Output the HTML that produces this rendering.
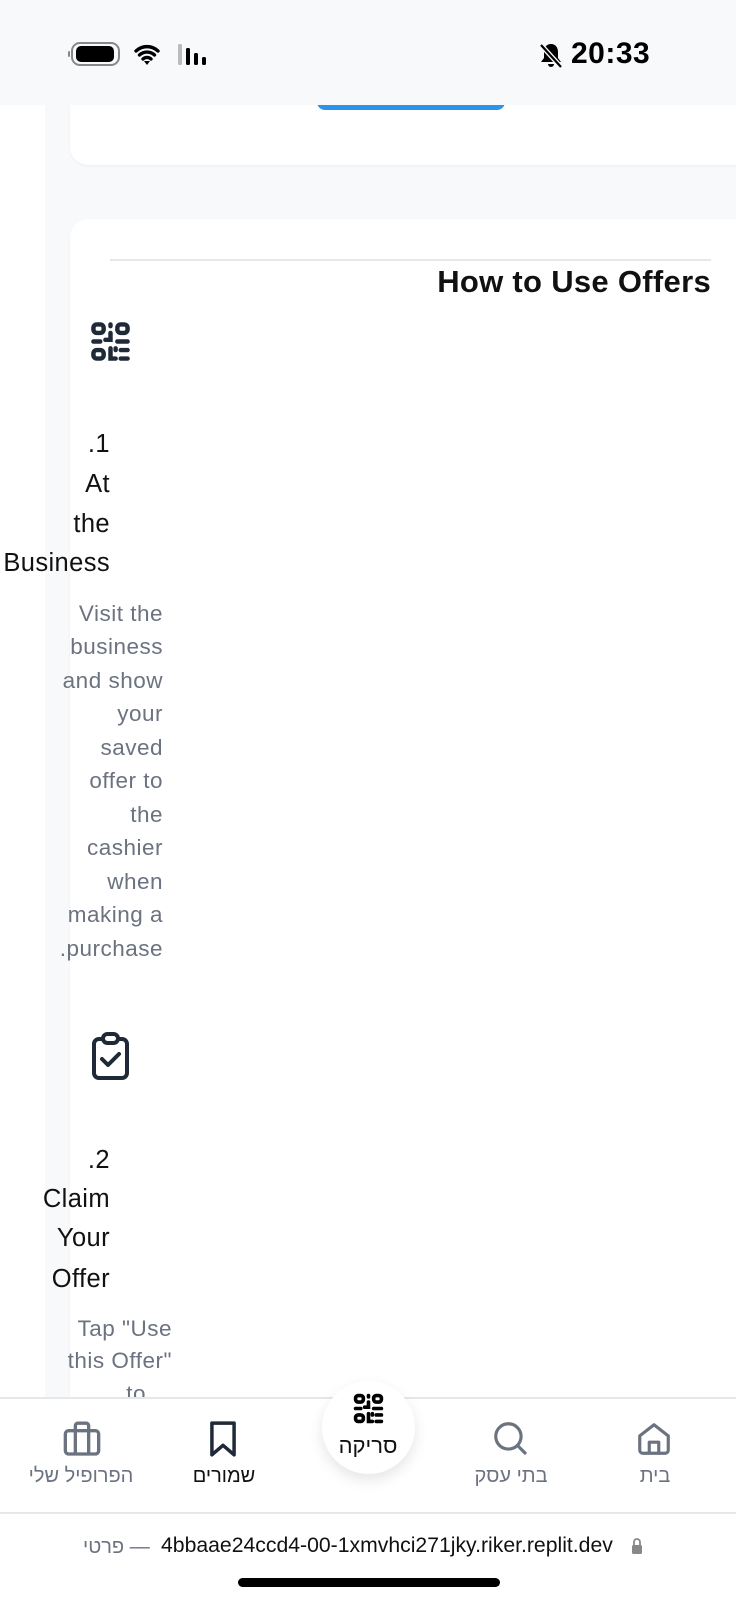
<!DOCTYPE html>
<html><head><meta charset="utf-8">
<style>
*{margin:0;padding:0;box-sizing:border-box}
body{width:736px;height:1600px;position:relative;overflow:hidden;background:#fff;font-family:"Liberation Sans","Noto Sans CJK JP",sans-serif;}
.a{position:absolute;white-space:nowrap}
.t{font-size:25.5px;color:#111;line-height:40px;text-align:right;width:200px;letter-spacing:0.4px}
.d{font-size:22.5px;color:#6b7280;line-height:33.5px;text-align:right;width:200px;letter-spacing:0.5px}
.nl{font-size:20px;color:#6b7280;text-align:center;width:160px}
</style></head><body>
<div class="a" style="left:45px;top:0;width:691px;height:1400px;background:#f8f9fa"></div>
<div class="a" style="left:70px;top:90px;width:700px;height:75px;background:#fff;border-radius:0 0 0 18px;box-shadow:0 1px 2px rgba(0,0,0,0.05)"></div>
<div class="a" style="left:317px;top:90px;width:188px;height:20px;background:#2b93ec;border-radius:0 0 8px 8px"></div>
<div class="a" style="left:0;top:0;width:736px;height:105px;background:#f8f9fa"></div>
<div class="a" style="left:70px;top:219px;width:700px;height:1200px;background:#fff;border-radius:18px 0 0 0;box-shadow:0 1px 2px rgba(0,0,0,0.05)"></div>
<div class="a" style="left:110px;top:259px;width:601px;height:2px;background:#e5e7eb"></div>
<div class="a" style="right:25px;top:262px;font-size:31px;font-weight:bold;color:#111;line-height:40px;letter-spacing:0.3px">How to Use Offers</div>

<svg class="a" style="left:66px;top:40px" width="160" height="30" viewBox="0 0 160 30">
<rect x="6" y="3" width="47" height="22" rx="8" fill="none" stroke="#888" stroke-width="2"/>
<rect x="2" y="11" width="2" height="6" rx="1" fill="#888"/>
<rect x="10" y="6" width="38" height="16" rx="5" fill="#000"/>
<path d="M70 11 a16 16 0 0 1 22 0 M73.5 15 a11 11 0 0 1 15 0 M77 19 a6 6 0 0 1 8 0" stroke="#000" stroke-width="3.4" fill="none" stroke-linecap="round"/>
<path d="M78 21 L81 25 L84 21 Z" fill="#000"/>
<rect x="112" y="4" width="4" height="21" rx="1.5" fill="#bbb"/>
<rect x="120" y="8" width="4" height="17" rx="1.5" fill="#000"/>
<rect x="128" y="13" width="4" height="12" rx="1.5" fill="#000"/>
<rect x="136" y="17" width="4" height="8" rx="1.5" fill="#000"/>
</svg>
<svg class="a" style="left:538px;top:42px" width="26" height="28" viewBox="0 0 26 28">
<path d="M13 2 C8 2 6 6 6 10 L6 16 L3 20 L23 20 L20 16 L20 10 C20 6 18 2 13 2 Z" fill="#000"/>
<path d="M10 22 a3 3 0 0 0 6 0 Z" fill="#000"/>
<path d="M3 3 L23 25" stroke="#f8f9fa" stroke-width="5"/>
<path d="M3 3 L23 25" stroke="#000" stroke-width="2.2"/>
</svg>
<div class="a" style="left:571px;top:36px;font-size:30px;font-weight:bold;color:#000;line-height:36px;letter-spacing:0.5px">20:33</div>

<svg class="a" style="left:90px;top:321px" width="41" height="41" viewBox="0 0 24 24" fill="none" stroke="#1f2937" stroke-width="2.6" stroke-linecap="round">
<rect x="2" y="2" width="6" height="5" rx="2"/><rect x="16" y="2" width="6" height="5" rx="2"/><rect x="2" y="17" width="6" height="5" rx="2"/>
<path d="M12 2v1 M12 7v4h-3 M2 12h4 M16 12h6 M12 16v6h3 M18 17h4 M18 22h4 M15 16v1"/>
</svg>
<div class="a t" style="right:626px;top:424px">.1</div>
<div class="a t" style="right:626px;top:464px">At</div>
<div class="a t" style="right:626px;top:504px">the</div>
<div class="a t" style="right:626px;top:543px">Business</div>
<div class="a d" style="right:573px;top:597px">Visit the</div>
<div class="a d" style="right:573px;top:630px">business</div>
<div class="a d" style="right:573px;top:664px">and show</div>
<div class="a d" style="right:573px;top:697px">your</div>
<div class="a d" style="right:573px;top:731px">saved</div>
<div class="a d" style="right:573px;top:764px">offer to</div>
<div class="a d" style="right:573px;top:798px">the</div>
<div class="a d" style="right:573px;top:831px">cashier</div>
<div class="a d" style="right:573px;top:865px">when</div>
<div class="a d" style="right:573px;top:898px">making a</div>
<div class="a d" style="right:573px;top:932px">.purchase</div>

<svg class="a" style="left:91px;top:1032px" width="39" height="49" viewBox="0 0 39 49" fill="none" stroke="#1f2937" stroke-width="4" stroke-linejoin="round" stroke-linecap="round">
<rect x="3" y="7" width="33" height="39" rx="5"/>
<rect x="12" y="2" width="15" height="9" rx="4.5" fill="#fff"/>
<path d="M11 27 L17 33 L28 22"/>
</svg>
<div class="a t" style="right:626px;top:1140px">.2</div>
<div class="a t" style="right:626px;top:1179px">Claim</div>
<div class="a t" style="right:626px;top:1218px">Your</div>
<div class="a t" style="right:626px;top:1259px">Offer</div>
<div class="a d" style="right:564px;top:1312px">Tap "Use</div>
<div class="a d" style="right:564px;top:1344px">this Offer"</div>
<div class="a d" style="right:590px;top:1377px">to</div>

<div class="a" style="left:0;top:1397px;width:736px;height:117px;background:#fff;border-top:2px solid #e5e7eb;border-bottom:2px solid #e5e7eb"></div>
<div class="a" style="left:322px;top:1381px;width:93px;height:93px;border-radius:50%;background:#fff;box-shadow:0 6px 14px rgba(0,0,0,0.1)"></div>
<svg class="a" style="left:353px;top:1393px" width="31" height="31" viewBox="0 0 24 24" fill="none" stroke="#000" stroke-width="2.8" stroke-linecap="round">
<rect x="2" y="2" width="6" height="5" rx="2"/><rect x="16" y="2" width="6" height="5" rx="2"/><rect x="2" y="17" width="6" height="5" rx="2"/>
<path d="M12 2v1 M12 7v4h-3 M2 12h4 M16 12h6 M12 16v6h3 M18 17h4 M18 22h4 M15 16v1"/>
</svg>
<div class="a" style="left:288px;top:1433px;width:160px;text-align:center;font-size:22px;color:#111">סריקה</div>
<svg class="a" style="left:635px;top:1420px" width="38" height="38" viewBox="0 0 24 24" fill="none" stroke="#6b7280" stroke-width="2" stroke-linejoin="round">
<path d="M3 10 L12 3 L21 10 V19 a2 2 0 0 1-2 2 H5 a2 2 0 0 1-2-2 Z"/><path d="M9 21 V14 H15 V21"/>
</svg>
<svg class="a" style="left:491px;top:1419px" width="38" height="38" viewBox="0 0 24 24" fill="none" stroke="#6b7280" stroke-width="2" stroke-linecap="round">
<circle cx="11" cy="11" r="8"/><path d="M17 17 L21.5 21.5"/>
</svg>
<svg class="a" style="left:204px;top:1419px" width="38" height="40" viewBox="0 0 24 24" fill="none" stroke="#1f2937" stroke-width="2.2" stroke-linejoin="round">
<path d="M5 2 H19 V22 L12 16 L5 22 Z"/>
</svg>
<svg class="a" style="left:62px;top:1419px" width="40" height="40" viewBox="0 0 24 24" fill="none" stroke="#6b7280" stroke-width="2" stroke-linejoin="round">
<rect x="2" y="7" width="20" height="14" rx="2"/><path d="M8 7 V4 a1.5 1.5 0 0 1 1.5-1.5 h5 A1.5 1.5 0 0 1 16 4 V7 M8 7 V21 M16 7 V21"/>
</svg>
<div class="a nl" style="left:575px;top:1465px">בית</div>
<div class="a nl" style="left:431px;top:1465px">בתי עסק</div>
<div class="a nl" style="left:144px;top:1465px;color:#111">שמורים</div>
<div class="a nl" style="left:1px;top:1465px">הפרופיל שלי</div>

<div class="a" style="left:0;top:1515px;width:736px;height:85px;background:#fff"></div>
<div class="a" style="left:83px;top:1535px;font-size:20px;color:#6b7280;line-height:24px">פרטי —</div>
<div class="a" style="left:161px;top:1534px;font-size:21.2px;color:#111;line-height:24px">4bbaae24ccd4-00-1xmvhci271jky.riker.replit.dev</div>
<svg class="a" style="left:631px;top:1537px" width="12" height="18" viewBox="0 0 12 18"><path d="M3 8 V5 a3 3 0 0 1 6 0 V8" fill="none" stroke="#888" stroke-width="1.8"/><rect x="1" y="8" width="10" height="9" rx="1.5" fill="#888"/></svg>
<div class="a" style="left:238px;top:1578px;width:262px;height:9px;border-radius:5px;background:#000"></div>
</body></html>
